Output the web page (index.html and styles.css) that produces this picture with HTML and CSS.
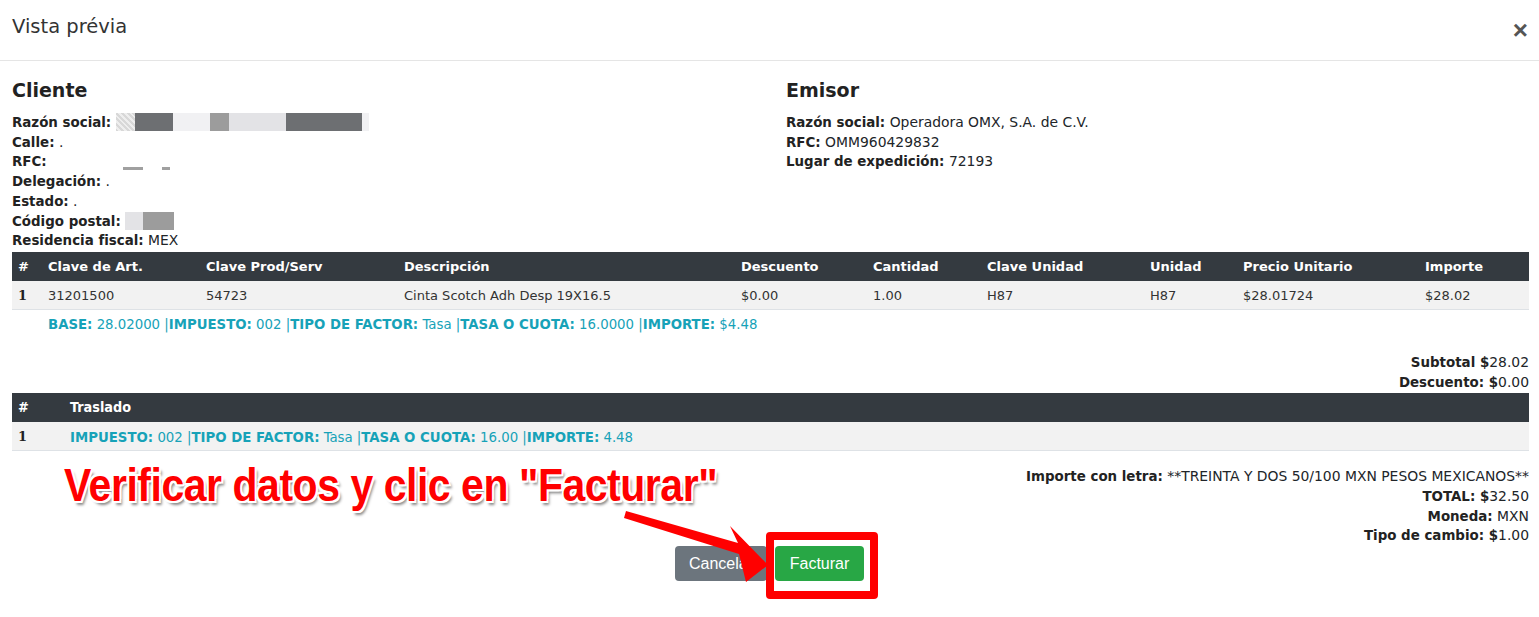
FILE: index.html
```html
<!DOCTYPE html>
<html lang="es">
<head>
<meta charset="utf-8">
<title>Vista prévia</title>
<link rel="stylesheet" href="styles.css">
</head>
<body>
<div class="modal">
  <div class="modal-header">
    <h5 class="modal-title">Vista prévia</h5>
    <span class="close">&times;</span>
  </div>
  <div class="modal-body">
    <div class="parties">
      <div class="party">
        <h4>Cliente</h4>
        <div class="line"><b>Razón social:</b> <span class="redact"><i class="r r1"></i><i class="r r2"></i><i class="r r3"></i><i class="r r4"></i><i class="r r5"></i><i class="r r2 w76"></i><i class="r r3 w7"></i></span></div>
        <div class="line"><b>Calle:</b> .</div>
        <div class="line"><b>RFC:</b> <span class="rfc"><i class="rb rb1"></i><i class="rb rb2"></i></span></div>
        <div class="line"><b>Delegación:</b> .</div>
        <div class="line"><b>Estado:</b> .</div>
        <div class="line"><b>Código postal:</b> <span class="redact"><i class="r r5 w18"></i><i class="r r4 w31"></i></span></div>
        <div class="line"><b>Residencia fiscal:</b> MEX</div>
      </div>
      <div class="party">
        <h4>Emisor</h4>
        <div class="line"><b>Razón social:</b> Operadora OMX, S.A. de C.V.</div>
        <div class="line"><b>RFC:</b> OMM960429832</div>
        <div class="line"><b>Lugar de expedición:</b> 72193</div>
      </div>
    </div>

    <table class="grid items">
      <colgroup>
        <col class="c30"><col class="c158"><col class="c198"><col class="c337"><col class="c132"><col class="c114"><col class="c163"><col class="c93"><col class="c182"><col class="c110">
      </colgroup>
      <thead>
        <tr><th>#</th><th>Clave de Art.</th><th>Clave Prod/Serv</th><th>Descripción</th><th>Descuento</th><th>Cantidad</th><th>Clave Unidad</th><th>Unidad</th><th>Precio Unitario</th><th>Importe</th></tr>
      </thead>
      <tbody>
        <tr><td class="num">1</td><td>31201500</td><td>54723</td><td>Cinta Scotch Adh Desp 19X16.5</td><td>$0.00</td><td>1.00</td><td>H87</td><td>H87</td><td>$28.01724</td><td>$28.02</td></tr>
      </tbody>
    </table>
    <div class="tax-line"><b>BASE:</b> 28.02000 |<b>IMPUESTO:</b> 002 |<b>TIPO DE FACTOR:</b> Tasa |<b>TASA O CUOTA:</b> 16.0000 |<b>IMPORTE:</b> $4.48</div>

    <div class="totals">
      <div class="line"><b>Subtotal $</b>28.02</div>
      <div class="line"><b>Descuento: $</b>0.00</div>
    </div>

    <table class="grid traslados">
      <colgroup><col class="c52"><col></colgroup>
      <thead><tr><th>#</th><th>Traslado</th></tr></thead>
      <tbody><tr><td class="num">1</td><td class="teal"><b>IMPUESTO:</b> 002 |<b>TIPO DE FACTOR:</b> Tasa |<b>TASA O CUOTA:</b> 16.00 |<b>IMPORTE:</b> 4.48</td></tr></tbody>
    </table>

    <div class="summary">
      <div class="line"><b>Importe con letra:</b> **TREINTA Y DOS 50/100 MXN PESOS MEXICANOS**</div>
      <div class="line"><b>TOTAL: $</b>32.50</div>
      <div class="line"><b>Moneda:</b> MXN</div>
      <div class="line"><b>Tipo de cambio: $</b>1.00</div>
    </div>

    <div class="actions">
      <button class="btn btn-secondary">Cancelar</button>
      <button class="btn btn-success">Facturar</button>
    </div>
  </div>

  <div class="callout">Verificar datos y clic en "Facturar"</div>
  <svg class="arrow" width="1539" height="617" viewBox="0 0 1539 617">
    <polygon points="626,511 738,543 730,526 768,565 746,582 739,554 624,518" fill="#ff0000"/>
  </svg>
  <div class="highlight"></div>
</div>
</body>
</html>
```

FILE: styles.css
```css
* { box-sizing: border-box; }
html, body { margin: 0; padding: 0; background: #fff; }
body {
  font-family: "DejaVu Sans", Verdana, sans-serif;
  font-size: 13px;
  color: #212529;
}
.modal { position: relative; width: 1539px; height: 617px; overflow: hidden; }
.modal-header {
  height: 61px;
  border-bottom: 1px solid #e5e5e5;
  display: flex;
  align-items: center;
  justify-content: space-between;
  padding: 0 11px 8px 12px;
}
.modal-title { margin: 0; font-weight: normal; font-size: 19.5px; color: #333; }
.close { font-size: 26px; color: #555; font-weight: bold; line-height: 1; margin-top: 8px; font-family: "Liberation Sans", Arial, sans-serif; }
.modal-body { padding: 17px 10px 0 12px; }
.parties { display: grid; grid-template-columns: 774px 1fr; }
.party h4 { margin: 0 0 11px; font-size: 19px; line-height: 24px; font-weight: bold; color: #222; }
.line { line-height: 19.7px; white-space: nowrap; font-size: 13.9px; }
.line b { color: #222; font-size: 13.4px; }
.redact { display: inline-flex; vertical-align: -4px; height: 18px; }
.r { display: inline-block; height: 18px; }
.r1 { width: 19px; background: repeating-linear-gradient(45deg, #d8d8d8 0 2px, #eee 2px 4px); }
.r2 { width: 38px; background: #6d6f72; }
.r3 { width: 37px; background: #f1f1f3; }
.r4 { width: 19px; background: #9c9c9c; }
.r5 { width: 57px; background: #e3e3e6; }
.w76 { width: 76px; }
.w7 { width: 7px; }
.w18 { width: 18px; }
.w31 { width: 31px; }
.rfc { display: inline-block; position: relative; width: 60px; height: 10px; }
.rb { position: absolute; top: 11px; height: 3px; background: #a0a0a0; }
.rb1 { left: 72px; width: 20px; }
.rb2 { left: 111px; width: 8px; }

.grid { width: 1517px; border-collapse: collapse; table-layout: fixed; margin-top: 1px; }
.grid th { background: #343a40; color: #fff; text-align: left; font-weight: bold; height: 29px; padding: 0 6px; font-size: 13px; }
.grid td { background: #f2f2f2; height: 29px; padding: 0 6px; border-bottom: 1px solid #dee2e6; color: #333; }
.grid td.num { font-weight: bold; color: #222; font-family: "DejaVu Serif", Georgia, serif; }
.c30 { width: 30px; } .c158 { width: 158px; } .c198 { width: 198px; } .c337 { width: 337px; }
.c132 { width: 132px; } .c114 { width: 114px; } .c163 { width: 163px; } .c93 { width: 93px; }
.c182 { width: 182px; } .c110 { width: 110px; } .c52 { width: 52px; }

.tax-line { color: #17a2b8; font-size: 13.3px; padding: 5px 0 0 36px; line-height: 20px; }
.tax-line b { color: #17a2b8; }
.totals { text-align: right; padding-top: 18px; }
.traslados { margin-top: 0; }
.traslados th, .traslados td { font-family: "DejaVu Sans Condensed", "DejaVu Sans", sans-serif; font-size: 14.3px; }
.traslados td.num { font-family: "DejaVu Serif", Georgia, serif; font-size: 13px; }
.traslados td.teal { color: #17a2b8; font-size: 14.8px; }
.teal b { color: #17a2b8; }
.summary { text-align: right; padding-top: 16px; }
.actions { display: flex; justify-content: center; gap: 8px; padding-top: 0; padding-right: 2px; }
.btn {
  font-family: "Liberation Sans", Tahoma, sans-serif;
  font-size: 16px; color: #fff; border: none; border-radius: 4px;
  height: 35px; padding: 0 12px; cursor: pointer;
}
.btn-secondary { background: #6c757d; width: 92px; }
.btn-success { background: #28a745; width: 89px; }

.callout {
  position: absolute; left: 64px; top: 458px;
  font-family: "Liberation Sans Narrow", "Liberation Sans", Arial, sans-serif;
  font-weight: bold; font-size: 46px; color: #ff0000; line-height: 54px;
  letter-spacing: -0.5px;
  transform: scaleX(0.89); transform-origin: left center;
  text-shadow: -2px -2px 0 #fff, 2px -2px 0 #fff, -2px 2px 0 #fff, 2px 2px 0 #fff, 0 -2px 0 #fff, 0 2px 0 #fff, 3px 4px 3px #888;
  white-space: nowrap;
}
.arrow { position: absolute; left: 0; top: 0; pointer-events: none; }
.highlight {
  position: absolute; left: 766px; top: 532px; width: 112px; height: 67px;
  border: 8px solid #ff0000; border-radius: 4px;
}
```
